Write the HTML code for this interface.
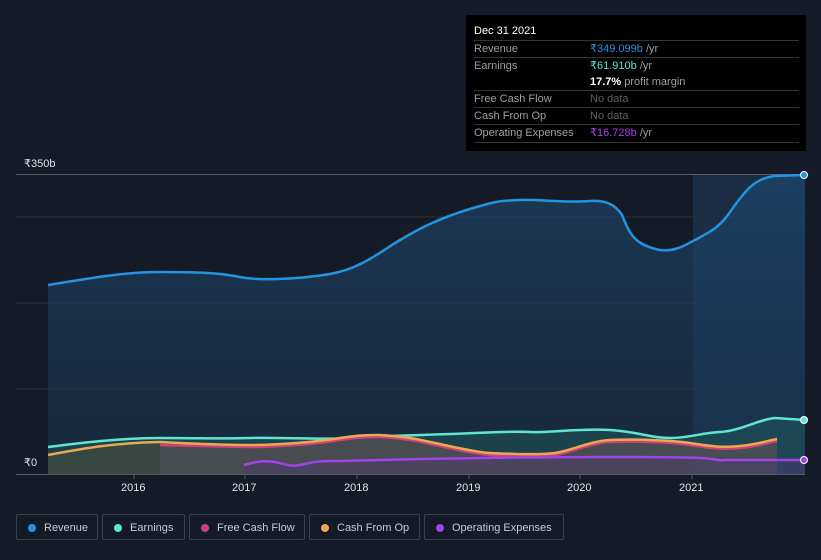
<!DOCTYPE html>
<html><head><meta charset="utf-8"><style>
body{margin:0;width:821px;height:560px;background:#151b26;font-family:"Liberation Sans",sans-serif;overflow:hidden;position:relative}
.tip{position:absolute;left:466px;top:15px;width:340px;height:136px;background:#000;border-radius:2px;color:#fff;font-size:11px}
.tip .h{position:absolute;left:8px;top:10px;font-size:11px}
.row{position:absolute;left:8px;width:325px;height:17px;border-top:1px solid #333;line-height:16px}
.row .l{position:absolute;left:0;color:#9aa0a8}
.row .v{position:absolute;left:116px;color:#9aa0a8}
.leg{position:absolute;top:514px;height:26px;border:1px solid #3a404b;border-radius:2px;color:#c7ccd3;font-size:11px;line-height:26px;box-sizing:border-box;padding-left:27px}
.leg i{position:absolute;left:11px;top:9px;width:8px;height:8px;border-radius:50%}
.ax{position:absolute;color:#e0e3e8;font-size:11px}
</style></head><body>
<svg width="821" height="560" style="position:absolute;left:0;top:0">
<defs><linearGradient id="g" x1="0" y1="0" x2="0" y2="1"><stop offset="0" stop-color="#1e4a72" stop-opacity=".6"/><stop offset="1" stop-color="#1a3550" stop-opacity=".5"/></linearGradient></defs>
<rect x="693" y="174" width="112" height="300" fill="#1a2d45"/>
<g stroke="#2a303a" stroke-width="1"><line x1="16" y1="217" x2="805" y2="217"/><line x1="16" y1="303" x2="805" y2="303"/><line x1="16" y1="389" x2="805" y2="389"/></g>
<line x1="16" y1="174.5" x2="805" y2="174.5" stroke="#555b66"/>
<path id="rv" d="M48,285 C80,280 120,272 160,272 S220,273 240,277 S300,279 330,274 S380,252 400,240 S440,218 470,209 S500,201 520,200 S560,203 590,201 C605,200 615,204 622,215 C630,235 635,245 660,250 C675,252 685,245 695,240 C710,232 718,228 728,215 C745,190 755,178 775,176 L805,175 L805,474 L48,474Z" fill="url(#g)"/>
<path d="M48,447 C80,443 120,438 160,438 S220,439 250,438 S320,440 350,438 S420,435 450,434 S510,431 530,432 S580,428 610,430 S650,438 670,438 S700,433 720,432 S760,419 775,418 L805,420 L805,474 L48,474Z" fill="#1f5a5e" fill-opacity=".5"/>
<path d="M48,455 C80,449 110,443 160,442 L160,474 L48,474Z" fill="#3d4a3f" fill-opacity=".8"/>
<path d="M160,443 C200,444 230,445 250,445 S310,443 340,438 S390,435 410,438 S470,452 490,453 S540,455 555,453 S590,441 610,440 S670,440 690,443 S720,448 740,446 S770,440 777,439 L777,474 L160,474Z" fill="#6a5552" fill-opacity=".55"/>
<path d="M244,465 C255,462 265,460 275,462 S290,467 300,465 S315,461 330,461 S380,460 420,459 S550,457 600,457 S680,457 700,458 S715,461 725,460 L805,460 L805,474 L244,474Z" fill="#4b3a6e" fill-opacity=".5"/>
<path d="M48,285 C80,280 120,272 160,272 S220,273 240,277 S300,279 330,274 S380,252 400,240 S440,218 470,209 S500,201 520,200 S560,203 590,201 C605,200 615,204 622,215 C630,235 635,245 660,250 C675,252 685,245 695,240 C710,232 718,228 728,215 C745,190 755,178 775,176 L805,175" fill="none" stroke="#2394e0" stroke-width="2.5"/>
<path d="M48,447 C80,443 120,438 160,438 S220,439 250,438 S320,440 350,438 S420,435 450,434 S510,431 530,432 S580,428 610,430 S650,438 670,438 S700,433 720,432 S760,419 775,418 L805,420" fill="none" stroke="#5ee6d0" stroke-width="2.5"/>
<path d="M160,445 C200,446 230,447 250,447 S310,445 340,440 S390,437 410,440 S470,454 490,455 S540,457 555,455 S590,443 610,442 S670,442 690,445 S720,450 740,448 S770,442 777,441" fill="none" stroke="#d0417a" stroke-width="2.5"/>
<path d="M48,455 C80,449 110,443 160,442 C200,444 230,445 250,445 S310,443 340,438 S390,435 410,438 S470,452 490,453 S540,455 555,453 S590,441 610,440 S670,440 690,443 S720,448 740,446 S770,440 777,439" fill="none" stroke="#e9a954" stroke-width="2.5"/>
<path d="M244,465 C255,462 265,460 275,462 S290,467 300,465 S315,461 330,461 S380,460 420,459 S550,457 600,457 S680,457 700,458 S715,461 725,460 L805,460" fill="none" stroke="#a243e8" stroke-width="2.5"/>
<circle cx="804" cy="175" r="3.5" fill="#2394e0" stroke="#fff" stroke-width="1"/>
<circle cx="804" cy="420" r="3.5" fill="#5ee6d0" stroke="#fff" stroke-width="1"/>
<circle cx="804" cy="460" r="3.5" fill="#a243e8" stroke="#fff" stroke-width="1"/>
<line x1="16" y1="474.5" x2="805" y2="474.5" stroke="#555b66"/>
<g stroke="#555b66"><line x1="134" y1="474" x2="134" y2="479"/><line x1="245" y1="474" x2="245" y2="479"/><line x1="357" y1="474" x2="357" y2="479"/><line x1="469" y1="474" x2="469" y2="479"/><line x1="580" y1="474" x2="580" y2="479"/><line x1="692" y1="474" x2="692" y2="479"/></g>
</svg>
<div class="ax" style="left:24px;top:157px">₹350b</div>
<div class="ax" style="left:24px;top:456px">₹0</div>
<div class="ax" style="left:121px;top:482px">2016</div>
<div class="ax" style="left:232px;top:482px">2017</div>
<div class="ax" style="left:344px;top:482px">2018</div>
<div class="ax" style="left:456px;top:482px">2019</div>
<div class="ax" style="left:567px;top:482px">2020</div>
<div class="ax" style="left:679px;top:482px">2021</div>
<div class="tip">
<div class="h">Dec 31 2021</div>
<div class="row" style="top:25px"><span class="l">Revenue</span><span class="v"><b style="color:#2394e0;font-weight:normal">₹349.099b</b> /yr</span></div>
<div class="row" style="top:42px;height:33px"><span class="l">Earnings</span><span class="v"><b style="color:#5ee6d0;font-weight:normal">₹61.910b</b> /yr</span><span class="v" style="top:16px"><b style="color:#fff">17.7%</b> profit margin</span></div>
<div class="row" style="top:75px"><span class="l">Free Cash Flow</span><span class="v" style="color:#5c6068">No data</span></div>
<div class="row" style="top:92px"><span class="l">Cash From Op</span><span class="v" style="color:#5c6068">No data</span></div>
<div class="row" style="top:109px;border-bottom:1px solid #333"><span class="l">Operating Expenses</span><span class="v"><b style="color:#a243e8;font-weight:normal">₹16.728b</b> /yr</span></div>
</div>
<div class="leg" style="left:16px;width:82px"><i style="background:#2394e0"></i>Revenue</div>
<div class="leg" style="left:102px;width:83px"><i style="background:#5ee6d0"></i>Earnings</div>
<div class="leg" style="left:189px;width:116px"><i style="background:#d0417a"></i>Free Cash Flow</div>
<div class="leg" style="left:309px;width:111px"><i style="background:#e9a954"></i>Cash From Op</div>
<div class="leg" style="left:424px;width:140px"><i style="background:#a243e8"></i>Operating Expenses</div>
</body></html>
